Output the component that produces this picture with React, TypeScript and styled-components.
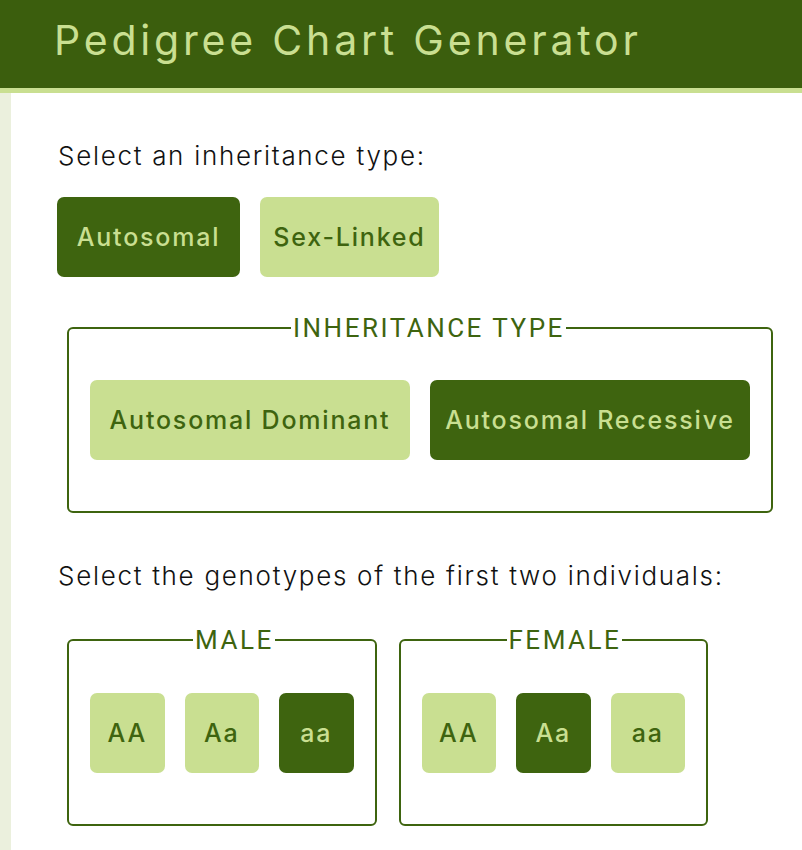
import React, { useState } from "react";
import styled, { createGlobalStyle } from "styled-components";

const GlobalStyle = createGlobalStyle`
  html, body { margin: 0; padding: 0; }
  body {
    background: #ebf0dd;
    font-family: Inter, "Noto Sans", sans-serif;
    color: #111;
  }
`;

const DARK = "#3e640f";
const HEAD = "#3b5e0d";
const LIGHT = "#c9df91";

const Header = styled.header`
  box-sizing: border-box;
  height: 93px;
  background: ${HEAD};
  border-bottom: 5px solid ${LIGHT};
  display: flex;
  align-items: center;
  padding: 0 0 8px 54px;
`;

const Title = styled.h1`
  margin: 0;
  font-family: Inter, sans-serif;
  font-weight: 400;
  font-size: 41px;
  letter-spacing: 3.8px;
  color: ${LIGHT};
`;

const Main = styled.main`
  margin-left: 11px;
  background: #fff;
  padding: 38px 29px 30px 46px;
  min-height: 757px;
  box-sizing: border-box;
`;

const Prompt = styled.p`
  margin: 0 0 0 1px;
  font-size: 26px;
  font-weight: 300;
  letter-spacing: 1.7px;
  line-height: 50px;
`;

const Row = styled.div`
  display: flex;
  gap: 20px;
  margin-top: 16px;
`;

const Button = styled.button<{ $active?: boolean; $grow?: boolean; $w?: number }>`
  height: 80px;
  ${(p) => (p.$grow ? "flex: 1;" : "")}
  ${(p) => (p.$w ? `width: ${p.$w}px;` : "")}
  border: none;
  border-radius: 7px;
  background: ${(p) => (p.$active ? DARK : LIGHT)};
  color: ${(p) => (p.$active ? LIGHT : DARK)};
  font-family: Inter, sans-serif;
  font-size: 25px;
  font-weight: 500;
  letter-spacing: 1.8px;
  padding: 0;
  cursor: pointer;
`;

const Fieldset = styled.fieldset<{ $grow?: boolean }>`
  margin: 0;
  border: 2px solid ${DARK};
  border-radius: 6px;
  padding: 35px 21px 51px;
  min-width: 0;
  ${(p) => (p.$grow ? "flex: 1;" : "")}
`;

const Legend = styled.legend<{ $offset: number }>`
  margin: 0 0 0 ${(p) => p.$offset}px;
  padding: 0 1px 0 2px;
  font-family: Roboto, sans-serif;
  font-size: 26px;
  font-weight: 400;
  letter-spacing: 2.5px;
  line-height: 34px;
  color: ${DARK};
  text-transform: uppercase;
`;

const TypeBlock = styled.div`
  margin: 34px 0 0 10px;
  width: 706px;
`;

const ButtonRow = styled.div`
  display: flex;
  gap: 20px;
`;

const SecondPrompt = styled(Prompt)`
  margin-top: 38px;
`;

const GenoRow = styled.div`
  display: flex;
  gap: 22px;
  margin: 22px 0 0 10px;
  width: 641px;
`;

const GenoFieldset = styled(Fieldset)`
  padding-top: 36px;
`;

const genotypes = ["AA", "Aa", "aa"];

export default function App() {
  const [mode, setMode] = useState("Autosomal");
  const [sub, setSub] = useState("Autosomal Recessive");
  const [male, setMale] = useState("aa");
  const [female, setFemale] = useState("Aa");

  return (
    <>
      <GlobalStyle />
      <Header>
        <Title>Pedigree Chart Generator</Title>
      </Header>
      <Main>
        <Prompt>Select an inheritance type:</Prompt>
        <Row>
          <Button $w={183} $active={mode === "Autosomal"} onClick={() => setMode("Autosomal")}>
            Autosomal
          </Button>
          <Button $w={179} $active={mode === "Sex-Linked"} onClick={() => setMode("Sex-Linked")}>
            Sex-Linked
          </Button>
        </Row>
        <TypeBlock>
          <Fieldset>
            <Legend $offset={201}>Inheritance Type</Legend>
            <ButtonRow>
              {["Autosomal Dominant", "Autosomal Recessive"].map((t) => (
                <Button key={t} $grow $active={sub === t} onClick={() => setSub(t)}>
                  {t}
                </Button>
              ))}
            </ButtonRow>
          </Fieldset>
        </TypeBlock>
        <SecondPrompt>Select the genotypes of the first two individuals:</SecondPrompt>
        <GenoRow>
          <GenoFieldset $grow>
            <Legend $offset={103}>Male</Legend>
            <ButtonRow>
              {genotypes.map((g) => (
                <Button key={g} $grow $active={male === g} onClick={() => setMale(g)}>
                  {g}
                </Button>
              ))}
            </ButtonRow>
          </GenoFieldset>
          <GenoFieldset $grow>
            <Legend $offset={85}>Female</Legend>
            <ButtonRow>
              {genotypes.map((g) => (
                <Button key={g} $grow $active={female === g} onClick={() => setFemale(g)}>
                  {g}
                </Button>
              ))}
            </ButtonRow>
          </GenoFieldset>
        </GenoRow>
      </Main>
    </>
  );
}
